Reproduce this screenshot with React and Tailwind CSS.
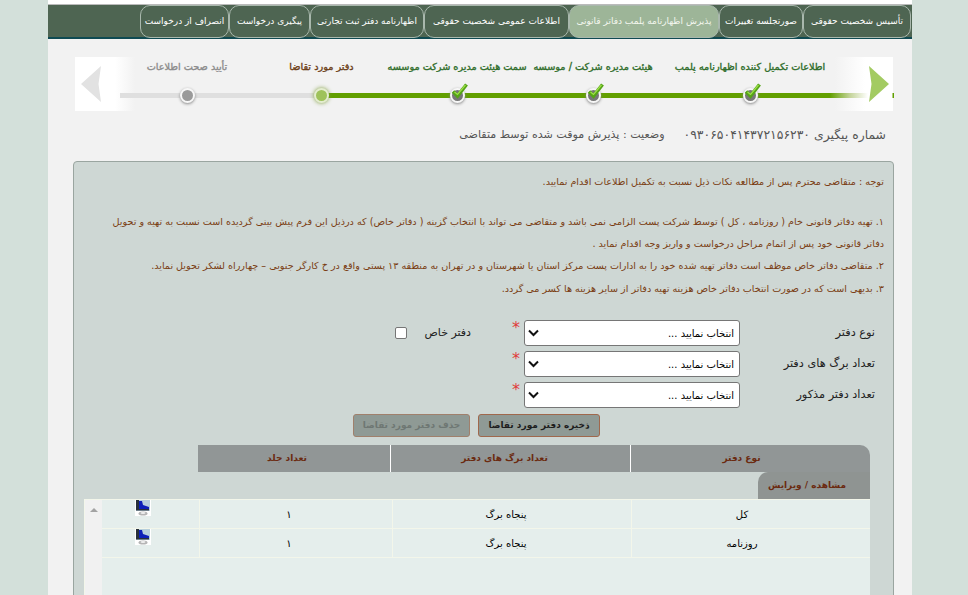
import React from 'react';

const tabs = [
  { label: 'تأسیس شخصیت حقوقی', w: 'w-[108px]' },
  { label: 'صورتجلسه تغییرات', w: 'w-[84px]' },
  { label: 'پذیرش اظهارنامه پلمب دفاتر قانونی', w: 'w-[150px]', active: true },
  { label: 'اطلاعات عمومی شخصیت حقوقی', w: 'w-[145px]' },
  { label: 'اظهارنامه دفتر ثبت تجارتی', w: 'w-[114px]' },
  { label: 'پیگیری درخواست', w: 'w-[81px]' },
  { label: 'انصراف از درخواست', w: 'w-[89px]' },
];

// order is left to right on screen
const steps = [
  { label: 'تأیید صحت اطلاعات', w: 'w-[134px]', state: 'pending' },
  { label: 'دفتر مورد تقاضا', w: 'w-[135px]', state: 'current' },
  { label: 'سمت هیئت مدیره شرکت موسسه', w: 'w-[136px]', state: 'done' },
  { label: 'هیئت مدیره شرکت / موسسه', w: 'w-[136px]', state: 'done' },
  { label: 'اطلاعات تکمیل کننده اظهارنامه پلمب', w: 'w-[178px]', state: 'done' },
];

const notes = [
  { id: 1, text: '۱. تهیه دفاتر قانونی خام ( روزنامه ، کل ) توسط شرکت پست الزامی نمی باشد و متقاضی می تواند با انتخاب گزینه ( دفاتر خاص) که درذیل این فرم پیش بینی گردیده است نسبت به تهیه و تحویل', h: 'h-[22px]' },
  { id: 2, text: 'دفاتر قانونی خود پس از اتمام مراحل درخواست و واریز وجه اقدام نماید .', h: 'h-[22px]' },
  { id: 3, text: '۲. متقاضی دفاتر خاص موظف است دفاتر تهیه شده خود را به ادارات پست مرکز استان یا شهرستان و در تهران به منطقه ۱۳ پستی واقع در خ کارگر جنوبی – چهارراه لشکر تحویل نماید.', h: 'h-[23px]' },
  { id: 4, text: '۳. بدیهی است که در صورت انتخاب دفاتر خاص هزینه تهیه دفاتر از سایر هزینه ها کسر می گردد.', h: 'h-[22px]' },
];

const rows = [
  { type: 'کل', pages: 'پنجاه برگ', count: '۱' },
  { type: 'روزنامه', pages: 'پنجاه برگ', count: '۱' },
];

function Arrow({ color, flip }) {
  return (
    <svg width="20" height="36" viewBox="0 0 20 36" className={flip ? '-scale-x-100' : ''}>
      <path d="M0 0 L20 18 L0 36 L2.5 18 Z" fill={color} />
    </svg>
  );
}

function StepNode({ state }) {
  if (state === 'current') {
    return (
      <div className="w-[15px] h-[15px] rounded-full bg-[#9ec25a] border-2 border-[#e4edd0] shadow-[0_0_4px_#7e9c3c]" />
    );
  }
  return (
    <div className="relative">
      <div className={`w-[15px] h-[15px] rounded-full border-2 border-[#f7f7f7] shadow-[0_1px_3px_#888] ${state === 'done' ? 'bg-[#777]' : 'bg-[#9a9a9a]'}`} />
      {state === 'done' && (
        <svg width="18" height="17" viewBox="0 0 18 17" className="absolute -top-[6px] left-[1px]">
          <path d="M2 9.5 L6.5 14 L15.5 2.5" fill="none" stroke="#55a516" strokeWidth="3.6" />
          <path d="M3.5 10 L6.5 12.5 L14.5 3" fill="none" stroke="#9fe04a" strokeWidth="1.2" />
        </svg>
      )}
    </div>
  );
}

function MonitorIcon() {
  return (
    <svg width="16" height="16" viewBox="0 0 16 16" className="bg-white shrink-0">
      <rect x="1" y="0" width="14" height="11" fill="#b7cfdc" />
      <path d="M4 1 H7 L8 5 L14 7 V10 H4 Z" fill="#0c1fb8" />
      <path d="M1 0 H4 V10 H1 Z M1 9 H14 V10.5 H1 Z" fill="#28303a" />
      <ellipse cx="8" cy="13.5" rx="4.5" ry="2" fill="#b5b5b5" />
      <ellipse cx="8" cy="13" rx="2.5" ry="1" fill="#eeeeee" />
    </svg>
  );
}

function FormSelect() {
  return (
    <div className="w-[216px] h-[26px] bg-white border border-[#767676] rounded-[3px] flex items-center justify-between pr-[5px] pl-[3px] text-[10px] text-black">
      <span>انتخاب نمایید ...</span>
      <svg width="11" height="8" viewBox="0 0 11 8">
        <path d="M1 1.5 L5.5 6 L10 1.5" fill="none" stroke="#111" strokeWidth="2" />
      </svg>
    </div>
  );
}

function FormRow({ label, children }) {
  return (
    <div className="flex items-center">
      <div className="w-[135px] text-[11.3px] text-[#222]">{label}</div>
      <FormSelect />
      <div className="w-[16px] self-start text-center text-[16px] leading-[16px] text-[#e03c3c]">*</div>
      {children}
    </div>
  );
}

export default function App() {
  return (
    <div dir="rtl" className="h-screen overflow-hidden bg-[#d3e0da] font-['DejaVu_Sans',sans-serif]">
      <div className="w-[864px] mr-[56px] h-full bg-[#f2f2f2]">
        {/* top tabs */}
        <div className="h-[5px] bg-white border-b border-[#bbb]" />
        <div className="h-[34px] bg-[#4e6552] border-b-2 border-[#0f4a52] flex pr-px">
          {tabs.map((t) => (
            <div
              key={t.label}
              className={`${t.w} h-[33px] shrink-0 flex items-center justify-center rounded-[10px] border border-[#a9b8ad] text-[9px] whitespace-nowrap overflow-hidden ${t.active ? 'bg-[#9db598] text-[#f4f7ef]' : 'text-white'}`}
            >
              {t.label}
            </div>
          ))}
        </div>

        {/* stepper */}
        <div dir="ltr" className="relative mt-[18px] mr-[19px] w-[818px] h-[54px] flex pl-[45px] bg-[linear-gradient(to_right,#fff_0,#fff_40px,#f2f2f2_60px,#f2f2f2_760px,#fff_790px,#fff_100%)]">
          <div className="absolute left-[45px] -right-px top-[36px] h-[5px] flex">
            <div className="w-[200px] bg-[#dfdfdf]" />
            <div className="flex-1 bg-[linear-gradient(to_right,#629f00_0,#629f00_510px,#c4d49a_530px,#fff_548px,#fff_572px,#629f00_573px)]" />
          </div>
          {steps.map((s) => (
            <div key={s.label} className={`${s.w} relative flex flex-col items-center`}>
              <div
                dir="rtl"
                className={`h-[21px] flex items-center whitespace-nowrap text-[9.7px] [-webkit-text-stroke:0.35px] ${
                  s.state === 'done' ? 'text-[#2f6d2a]' : s.state === 'current' ? 'text-[#6b3d16]' : 'text-[#8c8c8c]'
                }`}
              >
                {s.label}
              </div>
              <div className="mt-[10px]">
                <StepNode state={s.state} />
              </div>
            </div>
          ))}
          <div className="absolute left-[6px] top-[9px]">
            <Arrow color="#e2e2e2" flip />
          </div>
          <div className="absolute right-[4px] top-[9px]">
            <Arrow color="#a3cb62" />
          </div>
        </div>

        {/* tracking number */}
        <div className="mt-[15px] h-[18px] pr-[26px] flex gap-[19px] items-center text-[#555] whitespace-nowrap">
          <span className="text-[12.4px]">شماره پیگیری ۰۹۳۰۶۵۰۴۱۴۳۷۲۱۵۶۲۳۰</span>
          <span className="text-[11.1px]">وضعیت : پذیرش موقت شده توسط متقاضی</span>
        </div>

        {/* main panel */}
        <div className="mt-[17px] mr-[18px] ml-[25px] bg-[#ced7d4] border border-[#9aa5a0] rounded-t-[4px] h-[500px]">
          <div className="pr-[9px] text-[9.6px] text-[#7a3d12] whitespace-nowrap">
            <div className="h-[20px] mt-[10px] flex items-center">توجه : متقاضی محترم پس از مطالعه نکات ذیل نسبت به تکمیل اطلاعات اقدام نمایید.</div>
            <div className="mt-[19px]">
              {notes.map((n) => (
                <div key={n.id} className={`${n.h} flex items-center`}>{n.text}</div>
              ))}
            </div>
          </div>

          <div className="mt-[20px] pr-[18px] flex flex-col gap-[5px]">
            <FormRow label="نوع دفتر">
              <div className="flex items-center mr-[37px] text-[11px] text-[#222]">
                <span>دفتر خاص</span>
                <span className="mr-[18px] w-[12px] h-[12px] bg-white border border-[#767676] rounded-[2px]" />
              </div>
            </FormRow>
            <FormRow label="تعداد برگ های دفتر" />
            <FormRow label="تعداد دفتر مذکور" />
          </div>

          <div className="mt-[6px] pr-[293px] flex gap-[8px] text-[9px] font-bold">
            <div className="w-[122px] h-[23px] flex items-center justify-center bg-[#8f9a95] border border-[#a0684c] rounded-[3px] text-[#1d1d1d]">ذخیره دفتر مورد تقاضا</div>
            <div className="w-[117px] h-[23px] flex items-center justify-center bg-[#8f9a95] border border-[#a0806c] rounded-[3px] text-[#6e7773]">حذف دفتر مورد تقاضا</div>
          </div>

          {/* table */}
          <div className="mt-[8px] mr-[23px] ml-[10px]">
            <div className="ml-[114px] h-[27px] flex text-[9px] font-bold text-[#6b2a10]">
              <div className="w-[239px] pr-[18px] flex items-center justify-center bg-[#919696] rounded-tr-[10px]">نوع دفتر</div>
              <div className="w-[240px] pr-[12px] flex items-center justify-center bg-[#919696] border-r border-white">تعداد برگ های دفتر</div>
              <div className="flex-1 pr-[14px] flex items-center justify-center bg-[#919696] border-r border-white">تعداد جلد</div>
            </div>
            <div className="h-[27px] flex">
              <div className="w-[112px] h-[27px] pr-[14px] flex items-center justify-center bg-[#8f9492] rounded-tl-[10px] text-[9px] font-bold text-[#6b2a10]">مشاهده / ویرایش</div>
            </div>
            <div className="h-[120px] bg-[#e5eeec] border-t border-[#f3f6ea] flex">
              <div className="flex-1">
                {rows.map((r) => (
                  <div key={r.type} className="h-[29px] flex border-b border-[#f3f6ea] text-[10px] text-black">
                    <div className="w-[239px] pr-[18px] flex items-center justify-center border-l border-[#f3f6ea]">{r.type}</div>
                    <div className="w-[239px] pr-[12px] flex items-center justify-center border-l border-[#f3f6ea]">{r.pages}</div>
                    <div className="w-[193px] pr-[14px] flex items-center justify-center border-l border-[#f3f6ea]">{r.count}</div>
                    <div className="flex-1 flex justify-end pl-[33px]">
                      <MonitorIcon />
                    </div>
                  </div>
                ))}
              </div>
              <div className="w-[18px] bg-[#f1f1f1] border-l border-[#f3f6ea] flex justify-center pt-[8px]">
                <div className="w-0 h-0 border-x-[4px] border-x-transparent border-b-[4px] border-b-[#a3a3a3]" />
              </div>
            </div>
          </div>
        </div>
      </div>
    </div>
  );
}
